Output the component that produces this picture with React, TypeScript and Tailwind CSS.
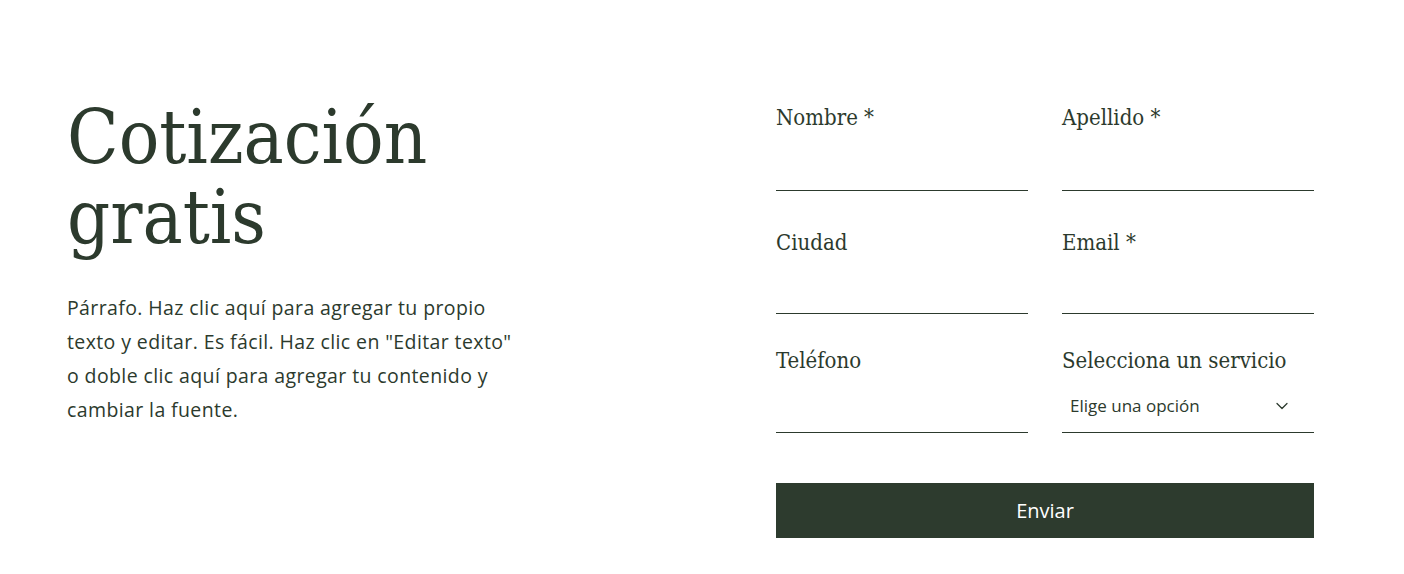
import { ChevronDown } from "lucide-react";

const serif = "font-['DejaVu_Serif_Condensed','DejaVu_Serif',serif]";
const sans = "font-['Open_Sans',sans-serif]";

function Field({
  label,
  className = "",
  children,
}: {
  label: string;
  className?: string;
  children?: React.ReactNode;
}) {
  return (
    <div className={`flex flex-col ${className}`}>
      <label className={`${serif} -mt-[2px] mb-[2px] text-[22px] leading-[28px] text-[#2c3a2d]`}>
        {label}
      </label>
      <div className="flex h-[57px] items-center border-b border-[#2c3a2d]">{children}</div>
    </div>
  );
}

export default function App() {
  return (
    <div className="min-h-screen bg-white text-[#2c3a2d]">
      <div className="flex px-[67px] pt-[97px]">
        {/* Left: heading + intro */}
        <div className="w-[709px] shrink-0">
          <h1 className={`${serif} text-[75px] leading-[80px] text-[#2c3a2d]`}>
            Cotización
            <br />
            gratis
          </h1>
          <p
            className={`${sans} mt-[34px] w-[462px] text-[19.5px] leading-[34px] tracking-[0.02em] text-[#2c3a2d]`}
          >
            Párrafo. Haz clic aquí para agregar tu propio texto y editar. Es fácil. Haz clic en
            "Editar texto" o doble clic aquí para agregar tu contenido y cambiar la fuente.
          </p>
        </div>

        {/* Right: form */}
        <form className="w-[538px] pt-[9px]" onSubmit={(e) => e.preventDefault()}>
          <div className="grid grid-cols-2 gap-x-[34px]">
            <Field label="Nombre *" />
            <Field label="Apellido *" />
          </div>
          <div className="mt-[40px] grid grid-cols-2 gap-x-[34px]">
            <Field label="Ciudad" className="[&>div]:h-[55px]" />
            <Field label="Email *" className="[&>div]:h-[55px]" />
          </div>
          <div className="mt-[35px] grid grid-cols-2 gap-x-[34px]">
            <Field label="Teléfono" className="[&>div]:h-[56px]" />
            <Field label="Selecciona un servicio" className="[&>div]:h-[56px]">
              <div className="flex w-full items-center justify-between pl-2 pr-[22px] pt-[3px]">
                <span className={`${sans} text-[17px] text-[#2c3a2d]`}>Elige una opción</span>
                <ChevronDown className="h-5 w-5 text-[#2c3a2d]" strokeWidth={1.5} />
              </div>
            </Field>
          </div>
          <button
            type="submit"
            className={`${sans} mt-[50px] h-[55px] w-full bg-[#2d3b2e] text-[20px] text-white`}
          >
            Enviar
          </button>
        </form>
      </div>
    </div>
  );
}
